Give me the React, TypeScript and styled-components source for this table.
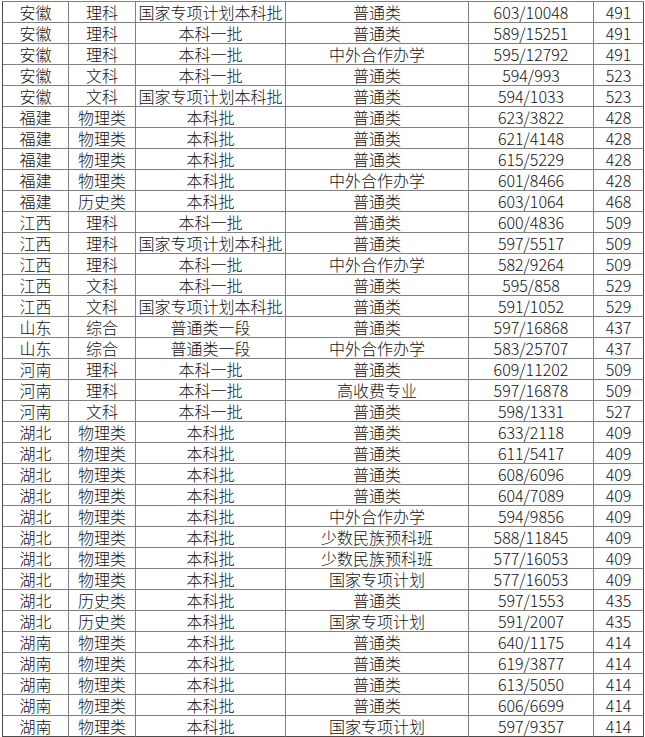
import styled, { createGlobalStyle } from 'styled-components'

const GlobalStyle = createGlobalStyle`
  html, body {
    margin: 0;
    padding: 0;
    background: #ffffff;
  }
  body {
    font-family: "Noto Sans CJK SC", "Noto Sans", sans-serif;
    color: #111111;
  }
`

const Table = styled.div`
  display: grid;
  grid-template-columns: 66px 67px 150px 183px 125px 50px;
  margin: 1px 0 0 2px;
  width: 642px;
  box-sizing: border-box;
  border-left: 1px solid #4a4a4a;
  border-top: 1px solid #808080;
`

const Cell = styled.div<{ $last?: boolean; $bottom?: boolean }>`
  box-sizing: border-box;
  height: 21px;
  display: flex;
  align-items: center;
  justify-content: center;
  font-size: 16px;
  font-weight: 300;
  line-height: 20px;
  white-space: nowrap;
  border-right: 1px solid ${(p) => (p.$last ? '#4a4a4a' : '#808080')};
  border-bottom: 1px solid ${(p) => (p.$bottom ? '#4a4a4a' : '#808080')};
`

// province, subject, batch, type, score/rank, control line
const rows: string[][] = [
  ['安徽', '理科', '国家专项计划本科批', '普通类', '603/10048', '491'],
  ['安徽', '理科', '本科一批', '普通类', '589/15251', '491'],
  ['安徽', '理科', '本科一批', '中外合作办学', '595/12792', '491'],
  ['安徽', '文科', '本科一批', '普通类', '594/993', '523'],
  ['安徽', '文科', '国家专项计划本科批', '普通类', '594/1033', '523'],
  ['福建', '物理类', '本科批', '普通类', '623/3822', '428'],
  ['福建', '物理类', '本科批', '普通类', '621/4148', '428'],
  ['福建', '物理类', '本科批', '普通类', '615/5229', '428'],
  ['福建', '物理类', '本科批', '中外合作办学', '601/8466', '428'],
  ['福建', '历史类', '本科批', '普通类', '603/1064', '468'],
  ['江西', '理科', '本科一批', '普通类', '600/4836', '509'],
  ['江西', '理科', '国家专项计划本科批', '普通类', '597/5517', '509'],
  ['江西', '理科', '本科一批', '中外合作办学', '582/9264', '509'],
  ['江西', '文科', '本科一批', '普通类', '595/858', '529'],
  ['江西', '文科', '国家专项计划本科批', '普通类', '591/1052', '529'],
  ['山东', '综合', '普通类一段', '普通类', '597/16868', '437'],
  ['山东', '综合', '普通类一段', '中外合作办学', '583/25707', '437'],
  ['河南', '理科', '本科一批', '普通类', '609/11202', '509'],
  ['河南', '理科', '本科一批', '高收费专业', '597/16878', '509'],
  ['河南', '文科', '本科一批', '普通类', '598/1331', '527'],
  ['湖北', '物理类', '本科批', '普通类', '633/2118', '409'],
  ['湖北', '物理类', '本科批', '普通类', '611/5417', '409'],
  ['湖北', '物理类', '本科批', '普通类', '608/6096', '409'],
  ['湖北', '物理类', '本科批', '普通类', '604/7089', '409'],
  ['湖北', '物理类', '本科批', '中外合作办学', '594/9856', '409'],
  ['湖北', '物理类', '本科批', '少数民族预科班', '588/11845', '409'],
  ['湖北', '物理类', '本科批', '少数民族预科班', '577/16053', '409'],
  ['湖北', '物理类', '本科批', '国家专项计划', '577/16053', '409'],
  ['湖北', '历史类', '本科批', '普通类', '597/1553', '435'],
  ['湖北', '历史类', '本科批', '国家专项计划', '591/2007', '435'],
  ['湖南', '物理类', '本科批', '普通类', '640/1175', '414'],
  ['湖南', '物理类', '本科批', '普通类', '619/3877', '414'],
  ['湖南', '物理类', '本科批', '普通类', '613/5050', '414'],
  ['湖南', '物理类', '本科批', '普通类', '606/6699', '414'],
  ['湖南', '物理类', '本科批', '国家专项计划', '597/9357', '414'],
]

const App = () => {
  return (
    <>
      <GlobalStyle />
      <Table>
        {rows.map((row, r) =>
          row.map((text, c) => (
            <Cell
              key={`${r}-${c}`}
              $last={c === row.length - 1}
              $bottom={r === rows.length - 1}
            >
              {text}
            </Cell>
          ))
        )}
      </Table>
    </>
  )
}

export default App
